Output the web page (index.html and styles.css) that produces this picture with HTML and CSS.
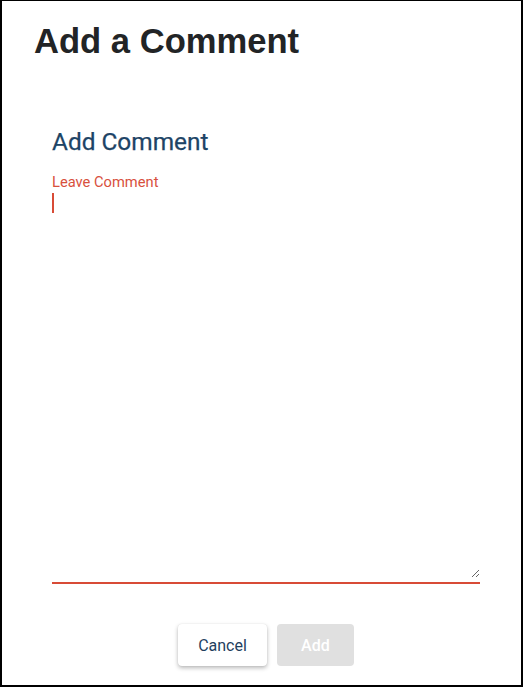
FILE: index.html
```html
<!DOCTYPE html>
<html lang="en">
<head>
<meta charset="utf-8">
<title>Add a Comment</title>
<link rel="stylesheet" href="styles.css">
</head>
<body>
<div class="page">
  <h1 class="title">Add a Comment</h1>
  <section class="card">
    <h2 class="heading">Add Comment</h2>
    <label class="label" for="comment">Leave Comment</label>
    <div class="field">
      <textarea id="comment" class="input"></textarea>
      <span class="caret"></span>
    </div>
    <div class="actions">
      <button class="btn btn-cancel" type="button">Cancel</button>
      <button class="btn btn-add" type="button" disabled>Add</button>
    </div>
  </section>
</div>
</body>
</html>
```

FILE: styles.css
```css
html, body {
  margin: 0;
  padding: 0;
  background: #fff;
}
.page {
  box-sizing: border-box;
  width: 523px;
  height: 687px;
  border-style: solid;
  border-color: #000;
  border-width: 1px 2px 2px 2px;
  padding-top: 20px;
  font-family: Roboto, "Liberation Sans", Arial, sans-serif;
}
.title {
  margin: 0 0 0 32px;
  font-family: "Liberation Sans", Arial, sans-serif;
  font-weight: 700;
  font-size: 34.6px;
  line-height: 40px;
  color: #222426;
}
.card {
  margin: 65px 0 0 50px;
  width: 428px;
  display: flex;
  flex-direction: column;
}
.heading {
  margin: 0;
  font-weight: 400;
  font-size: 24.4px;
  line-height: 32px;
  color: #1d4466;
  -webkit-text-stroke: 0.25px #1d4466;
}
.label {
  margin-top: 14px;
  font-size: 14.7px;
  line-height: 20px;
  color: #d8503d;
}
.field {
  position: relative;
  padding-bottom: 4px;
  border-bottom: 2px solid #d84b36;
}
.input {
  display: block;
  box-sizing: border-box;
  width: 428px;
  height: 386px;
  margin: 0;
  padding: 0;
  border: none;
  outline: none;
  background: transparent;
  resize: vertical;
  font-family: Roboto, sans-serif;
  font-size: 16px;
  line-height: 20px;
  color: #222;
}
.caret {
  position: absolute;
  left: 0;
  top: 1px;
  width: 2px;
  height: 20px;
  background: #d84b36;
}
.actions {
  margin-top: 40px;
  display: flex;
  justify-content: center;
  gap: 10px;
}
.btn {
  height: 42px;
  min-width: 77px;
  padding: 0 20px;
  border: none;
  border-radius: 4px;
  font-family: Roboto, sans-serif;
  font-size: 16px;
  font-weight: 400;
}
.btn-cancel {
  background: #fff;
  color: #1f3f5e;
  box-shadow: 0 2px 4px rgba(0, 0, 0, 0.28), 0 0 1px rgba(0, 0, 0, 0.12);
}
.btn-add {
  background: #e0e0e0;
  color: #fff;
  font-weight: 500;
}
```
